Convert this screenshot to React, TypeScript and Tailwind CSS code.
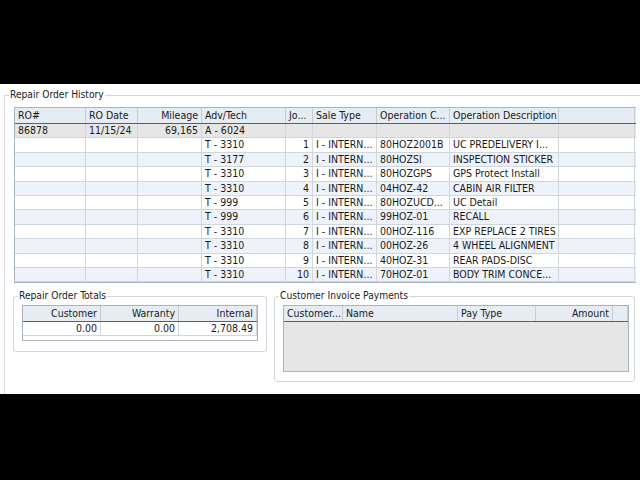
import React from "react";

const font = {
  fontFamily: '"DejaVu Sans Condensed", "DejaVu Sans", sans-serif',
  fontStretch: "condensed" as const,
};

type Col = { label: string; w: number; right?: boolean };

const histCols: Col[] = [
  { label: "RO#", w: 71 },
  { label: "RO Date", w: 52 },
  { label: "Mileage", w: 64, right: true },
  { label: "Adv/Tech", w: 84 },
  { label: "Jo...", w: 27 },
  { label: "Sale Type", w: 64 },
  { label: "Operation C...", w: 73 },
  { label: "Operation Description", w: 109 },
  { label: "", w: 76 },
];

const rows: (string | number)[][] = [
  ["86878", "11/15/24", "69,165", "A - 6024", "", "", "", "", ""],
  ["", "", "", "T - 3310", "1", "I - INTERN...", "80HOZ2001B", "UC PREDELIVERY I...", ""],
  ["", "", "", "T - 3177", "2", "I - INTERN...", "80HOZSI", "INSPECTION STICKER", ""],
  ["", "", "", "T - 3310", "3", "I - INTERN...", "80HOZGPS", "GPS Protect Install", ""],
  ["", "", "", "T - 3310", "4", "I - INTERN...", "04HOZ-42", "CABIN AIR FILTER", ""],
  ["", "", "", "T - 999", "5", "I - INTERN...", "80HOZUCD...", "UC Detail", ""],
  ["", "", "", "T - 999", "6", "I - INTERN...", "99HOZ-01", "RECALL", ""],
  ["", "", "", "T - 3310", "7", "I - INTERN...", "00HOZ-116", "EXP REPLACE 2 TIRES", ""],
  ["", "", "", "T - 3310", "8", "I - INTERN...", "00HOZ-26", "4 WHEEL ALIGNMENT", ""],
  ["", "", "", "T - 3310", "9", "I - INTERN...", "40HOZ-31", "REAR PADS-DISC", ""],
  ["", "", "", "T - 3310", "10", "I - INTERN...", "70HOZ-01", "BODY TRIM CONCE...", ""],
];

const rightCols = new Set([2, 4]);

function HeaderRow({ cols }: { cols: Col[] }) {
  return (
    <div className="flex h-[16px] bg-[#e6ecf4] border-b border-[#5a5f66]">
      {cols.map((c, i) => (
        <div
          key={i}
          style={{ width: c.w }}
          className={`shrink-0 h-full leading-[15px] px-[3px] whitespace-nowrap overflow-hidden border-r border-[#c4ccd6] ${
            c.right ? "text-right" : "text-left"
          }`}
        >
          {c.label}
        </div>
      ))}
    </div>
  );
}

function Group({
  title,
  className,
  legendClass,
  children,
}: {
  title: string;
  className: string;
  legendClass: string;
  children: React.ReactNode;
}) {
  return (
    <fieldset className={`border-[#d3d7db] ${className}`}>
      <legend className={`px-[1px] text-[10.2px] leading-[12px] text-[#222] ${legendClass}`}>{title}</legend>
      {children}
    </fieldset>
  );
}

export default function App() {
  return (
    <div className="w-[640px] h-[480px] bg-black flex flex-col text-[10.5px] text-[#1a1a1a]" style={font}>
      <div className="h-[84px] shrink-0" />
      <div className="h-[310px] shrink-0 bg-white overflow-hidden pt-[5px]">
        <Group
          title="Repair Order History"
          legendClass="ml-[-5px]"
          className="ml-[4px] border-l border-t h-[320px] pl-[9px] pt-[6px]"
        >
          <div className="w-[622px] border border-[#a9b4c1] border-r-0">
            <HeaderRow cols={histCols} />
            {rows.map((r, ri) => (
              <div
                key={ri}
                className={`flex h-[14.4px] ${
                  ri === 0 ? "bg-[#e6e6e6]" : ri % 2 === 0 ? "bg-[#eef2fa]" : "bg-white"
                } border-b border-[#cfd6de]`}
              >
                {histCols.map((c, ci) => (
                  <div
                    key={ci}
                    style={{ width: c.w }}
                    className={`shrink-0 h-full leading-[13px] px-[3px] whitespace-nowrap overflow-hidden border-r border-[#cfd6de] ${
                      rightCols.has(ci) ? "text-right" : "text-left"
                    }`}
                  >
                    {r[ci]}
                  </div>
                ))}
              </div>
            ))}
          </div>

          <div className="flex mt-[7px] gap-[7px]">
            <Group
              title="Repair Order Totals"
              legendClass="ml-[-4px]"
              className="ml-[-1px] border rounded-[3px] w-[254px] h-[62px] pl-[8px] pt-[3px]"
            >
              <div className="w-[236px] border border-[#a9b4c1] h-[36px] bg-white">
                <HeaderRow
                  cols={[
                    { label: "Customer", w: 78, right: true },
                    { label: "Warranty", w: 78, right: true },
                    { label: "Internal", w: 78, right: true },
                  ]}
                />
                <div className="flex h-[14px] border-b border-[#cfd6de]">
                  {["0.00", "0.00", "2,708.49"].map((v, i) => (
                    <div
                      key={i}
                      className="w-[78px] shrink-0 text-right px-[3px] leading-[13px] border-r border-[#cfd6de]"
                    >
                      {v}
                    </div>
                  ))}
                </div>
              </div>
            </Group>
            <Group
              title="Customer Invoice Payments"
              legendClass="ml-[-4px]"
              className="border rounded-[3px] w-[361px] h-[92px] pl-[8px] pt-[3px]"
            >
              <div className="w-[346px] border border-[#a9b4c1] h-[67px] bg-[#e6e6e6] flex flex-col">
                <HeaderRow
                  cols={[
                    { label: "Customer...", w: 59 },
                    { label: "Name", w: 115 },
                    { label: "Pay Type", w: 78 },
                    { label: "Amount", w: 77, right: true },
                    { label: "", w: 15 },
                  ]}
                />
              </div>
            </Group>
          </div>
        </Group>
      </div>
      <div className="flex-1" />
    </div>
  );
}
